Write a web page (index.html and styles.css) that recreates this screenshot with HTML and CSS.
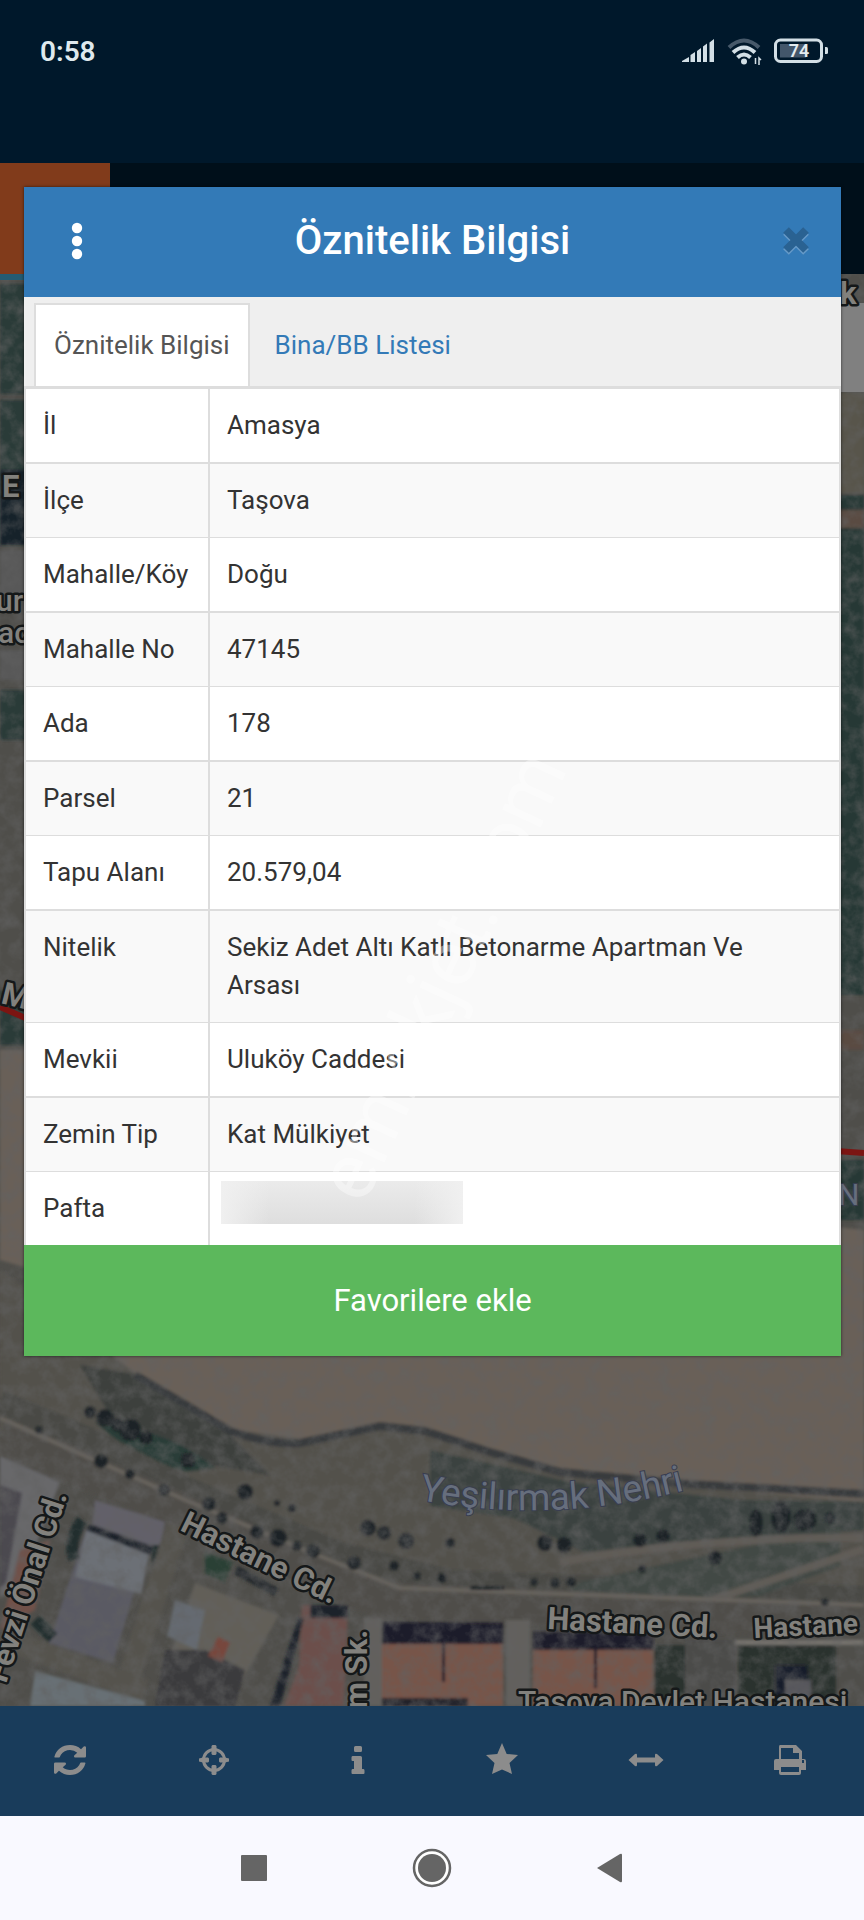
FILE: index.html
```html
<!DOCTYPE html>
<html lang="tr">
<head>
<meta charset="utf-8">
<meta name="viewport" content="width=device-width, initial-scale=1">
<title>Öznitelik Bilgisi</title>
<link rel="stylesheet" href="styles.css">
</head>
<body>
<div class="screen">
  <header class="status">
    <span class="clock">0:58</span>
    <div class="status-icons">
      <svg width="34" height="26" viewBox="0 0 34 26" fill="#d3dfe6" aria-hidden="true"><path d="M0 24v-1l7-4v5zM8.500 24v-7l4.500-3v10zM15 24V13l4-3v14zM21 24V8.500l4-3V24zM27.500 24V4.500L32 1v23z"/></svg>
      <svg width="36" height="28" viewBox="0 0 36 28" fill="none" stroke-width="4" aria-hidden="true"><path d="M2 9.500q15-14 30 0" stroke="#47596a"/><path d="M6 14.500q11-10 22 0M10.500 19.500q6.500-6 13 0" stroke="#d3dfe6"/><circle cx="17" cy="23.500" r="3" fill="#d3dfe6"/><path d="M28.500 20v6M32 20v7l0-7 2 2" stroke="#d3dfe6" stroke-width="1.500"/></svg>
      <svg width="56" height="26" viewBox="0 0 56 26" aria-hidden="true"><rect x="1.500" y="2" width="46" height="21.500" rx="5" fill="none" stroke="#d3dfe6" stroke-width="3"/><path d="M6 6h26v13.500H6z" fill="#43566a"/><path d="M51 9h1.500a1.500 1.500 0 0 1 1.500 1.500v4a1.500 1.500 0 0 1-1.500 1.500H51z" fill="#d3dfe6"/><text x="25" y="19" text-anchor="middle" class="battery-text">74</text></svg>
    </div>
  </header>
  <div class="appbar"><div class="appbar-mark"></div></div>
  <main class="map">
    <svg class="map-art" viewBox="0 274 864 1432" preserveAspectRatio="xMidYMax slice" aria-hidden="true">
      <defs>
        <filter id="grain" x="0" y="0" width="100%" height="100%"><feTurbulence type="fractalNoise" baseFrequency=".07" numOctaves="4" seed="7"/><feColorMatrix values="0 0 0 0 .12  0 0 0 0 .12  0 0 0 0 .12  1.300 0 0 0 -.5"/></filter>
        <filter id="soft"><feGaussianBlur stdDeviation="1.500"/></filter>
      </defs>
      <rect y="274" width="864" height="1432" fill="#4f4e4a"/>
      <g filter="url(#soft)">
        <path d="M0 284h30v110H0zM0 400h30v70H0zM0 690h30v50H0zM0 990h30v55H0z" fill="#2b3b38"/>
        <path d="M0 470h30v75H0z" fill="#14202a"/><path d="M0 550h30v45H0zM0 650h30v30H0z" fill="#595959"/>
        <path d="M836 393h28v100h-28z" fill="#59544b"/><path d="M836 495h28v500h-28zM836 1160h28v60h-28z" fill="#283935"/>
        <path d="M836 510h28v18h-28zM836 1030h28v20h-28z" fill="#5a4b43"/>
        <path d="M0 1050h30l90 100 744 80v272l-164-12-100-11-168-42-54-11-78 13-70-10-80-44-36-28-90-90-24-7z" fill="#696158"/>
        <path d="M0 1270l24 17 90 70 36 28 80 44 70 10 78-13 54 11 168 42 264 23v100L430 1590 200 1520 0 1430z" fill="#53514c"/>
        <path d="M80 1365l60 10 80 50 50 50-60-10-100-50z" fill="#3c413c"/>
        <path d="M135 1375q60 35 95 56 38 14 70 12l80-17 45 5 65 21 70 20 130 12 174 10" fill="none" stroke="#393b3d" stroke-width="8"/>
        <path d="M430 1450l140 32 170 18 124 2v28l-190 12-90 10-70-34-84-12z" fill="#3a4341"/>
        <path d="M130 1428q50 10 85 40l-30 4q-60-20-90-50z" fill="#2b3d38"/>
        <path d="M0 1402l90 38 90 46 160 68 110 28 414 16" fill="none" stroke="#484844" stroke-width="24"/>
        <path d="M580 1582l150-32 110-22v38l-80 30-200 2z" fill="#424a44"/>
        <path d="M560 1562q150-26 304-24M700 1604l164-55" fill="none" stroke="#605c56" stroke-width="8"/>
        <path d="M0 1436l180 74 110 52 90 38 484 22" fill="none" stroke="#504d4a" stroke-width="36"/>
        <path d="M0 1418l90 40 100 44 120 50 90 36 464 17" fill="none" stroke="#68645d" stroke-width="4"/>
        <path d="M0 1456l60 26-40 105-20 10z" fill="#67676a"/><path d="M0 1485l22 8-16 90-6 5z" fill="#4b4850"/>
        <path d="M20 1550l30-10-15 70-35 20z" fill="#6f5148"/>
        <path d="M95 1500l70 22-6 30-68-20z" fill="#626069"/>
        <path d="M86 1530l63 21-4 20-10 18-22 74-64-20z" fill="#5a5a64"/><path d="M86 1530l64 20-9 44-66-17z" fill="#6c6f76"/>
        <path d="M86 1530l4-6 64 23-4 8z" fill="#1b222a"/>
        <path d="M82 1520q-14 20-8 40M158 1545v25M35 1620l18 18" stroke="#222d2d" stroke-width="12"/>
        <path d="M178 1525L120 1706M15 1643l130 48" fill="none" stroke="#54524e" stroke-width="23"/>
        <path d="M195 1583l84 32-45 80-70-20z" fill="#625f58"/><path d="M175 1600l30 10-8 40-30-14z" fill="#656b71"/>
        <path d="M165 1650l40 0 40 20-10 36h-80z" fill="#3b3a3d"/>
        <path d="M218 1637l12 5-8 20-14-6z" fill="#77463e"/>
        <path d="M205 1552l28 10-8 20-20-8z" fill="#2b3f35"/><path d="M236 1570l40 22" stroke="#252b2d" stroke-width="9"/>
        <path d="M302 1605l46 0-4 101h-60l15-40z" fill="#6c504b"/><path d="M310 1605h38v13h-38zM298 1618l6 0-24 88h-10z" fill="#1c2029"/>
        <path d="M364 1618h18v88h-18zM506 1620h24v86h-24z" fill="#62605d"/>
        <path d="M382 1642h121v64H382zM533 1650h120v56H533z" fill="#775448"/>
        <path d="M382 1622h121v22H382zM533 1632h120v18H533zM442 1640h3v42h-3zM594 1646h3v42h-3z" fill="#1b1f2c"/>
        <path d="M382 1698h86v8h-86z" fill="#23222b"/>
        <path d="M35 1671l110 30v5H30z" fill="#687074"/>
        <path d="M655 1645h30v61h-30zM738 1645h98v61h-98z" fill="#29322f"/><path d="M685 1640h50v66h-50z" fill="#4c4c49"/><path d="M735 1640h129v5H735z" fill="#77736e"/>
        <path d="M775 1665h32l4 41h-36z" fill="#161e2b"/><path d="M785 1680h26v26h-26z" fill="#56575c"/>
        <g fill="#1c2427">
          <circle cx="39" cy="1430" r="4"/><circle cx="90" cy="1412" r="6"/><circle cx="105" cy="1418" r="9"/><circle cx="118" cy="1425" r="7"/><circle cx="130" cy="1430" r="11"/><circle cx="146" cy="1438" r="7"/><circle cx="101" cy="1461" r="7"/><circle cx="130" cy="1474" r="5"/><circle cx="164" cy="1490" r="6"/><circle cx="188" cy="1460" r="8"/><circle cx="209" cy="1504" r="7"/><circle cx="245" cy="1492" r="8"/><circle cx="222" cy="1518" r="6"/><circle cx="257" cy="1532" r="7"/><circle cx="278" cy="1538" r="9"/><circle cx="297" cy="1546" r="5"/><circle cx="313" cy="1551" r="7"/><circle cx="354" cy="1563" r="7"/><circle cx="277" cy="1503" r="3"/><circle cx="292" cy="1508" r="4"/><circle cx="368" cy="1528" r="8"/><circle cx="384" cy="1533" r="7"/><circle cx="406" cy="1541" r="8"/><circle cx="394" cy="1566" r="5"/><circle cx="417" cy="1576" r="4"/><circle cx="450" cy="1543" r="5"/><circle cx="545" cy="1543" r="8"/><circle cx="564" cy="1545" r="8"/><circle cx="442" cy="1578" r="5"/><circle cx="555" cy="1583" r="5"/><circle cx="571" cy="1582" r="5"/><circle cx="534" cy="1582" r="4"/><circle cx="640" cy="1540" r="7"/><circle cx="663" cy="1536" r="7"/><circle cx="642" cy="1569" r="4"/><circle cx="715" cy="1558" r="7"/><ellipse cx="756" cy="1523" rx="7" ry="14"/><ellipse cx="781" cy="1517" rx="10" ry="16"/><ellipse cx="805" cy="1520" rx="12" ry="11"/><circle cx="830" cy="1518" r="6"/><circle cx="825" cy="1602" r="4"/><path d="M470 1586h34v4h-34z"/>
        </g>
      </g>
      <rect y="274" width="864" height="1432" filter="url(#grain)"/>
      <path d="M836 303h28v89h-28z" fill="#808080"/><path d="M0 274h30v6H0z" fill="#245b72"/>
      <path d="M0 1007l30 13M836 1151l28 2" stroke="#7c1512" stroke-width="6"/>
      <g class="road">
        <text x="2" y="497">E</text><text x="-4" y="611" class="place">ur</text><text x="-2" y="643" class="place">ac</text>
        <text x="0" y="1003" transform="rotate(14 0 1003)">M</text><text x="840" y="304">k</text>
        <text x="179" y="1530" transform="rotate(26 179 1530)">Hastane Cd.</text>
        <text x="547" y="1629" transform="rotate(3 547 1629)">Hastane Cd.</text>
        <text x="754" y="1638" transform="rotate(-3 754 1638)" class="small">Hastane</text>
        <text x="6" y="1684" transform="rotate(-72 6 1684)">Fevzi Önal Cd.</text>
        <text x="367" y="1709" transform="rotate(-90 367 1709)">m Sk.</text>
        <text x="518" y="1712" class="place">Taşova Devlet Hastanesi</text>
      </g>
      <path id="river" d="M419 1500Q560 1526 700 1486" fill="none"/>
      <text class="water"><textPath href="#river">Yeşilırmak Nehri</textPath></text>
      <text x="838" y="1205" class="water small">N</text>
    </svg>
  </main>
  <nav class="toolbar" aria-label="Harita araçları">
    <button aria-label="Yenile"><svg width="32" height="30" viewBox="0 0 1536 1536" preserveAspectRatio="none"><path d="M1511 928q0 5-1 7-64 268-268 434.500t-478 166.500q-146 0-282.500-55t-243.500-157l-129 129q-19 19-45 19t-45-19-19-45v-448q0-26 19-45t45-19h448q26 0 45 19t19 45-19 45l-137 137q71 66 161 102t187 36q134 0 250-65t186-179q11-17 53-117 8-23 30-23h192q13 0 22.500 9.500t9.500 22.500zm25-800v448q0 26-19 45t-45 19h-448q-26 0-45-19t-19-45 19-45l138-138q-148-137-349-137-134 0-250 65t-186 179q-11 17-53 117-8 23-30 23h-199q-13 0-22.500-9.500t-9.500-22.500v-7q65-268 270-434.500t480-166.500q146 0 284 55.500t245 156.500l130-129q19-19 45-19t45 19 19 45z"/></svg></button>
    <button aria-label="Konum"><svg width="32" height="32" viewBox="0 0 32 32"><circle cx="16" cy="16" r="10.500" fill="none" stroke="currentColor" stroke-width="3"/><path d="M14.500 1h3l1 1v8l-1 1h-3l-1-1V2zM14.500 21h3l1 1v8l-1 1h-3l-1-1v-8zM1 14.500l4-1h5l1 1v3l-1 1H5l-4-1zM21 14.500l1-1h5l4 1v3l-4 1h-5l-1-1z"/></svg></button>
    <button aria-label="Bilgi"><svg width="14" height="30" viewBox="0 0 14 30"><path d="M4.500 1h5q1.500 0 1.500 1.500v3Q11 7 9.500 7h-5Q3 7 3 5.500v-3Q3 1 4.500 1zM1.500 11h8q1.500 0 1.500 1.500V24h1.500q1 0 1 1.500V28q0 1-1 1h-11q-1 0-1-1v-2.500Q.5 24 1.500 24H3v-8H1.500q-1 0-1-1v-2.500Q.5 11 1.500 11z"/></svg></button>
    <button aria-label="Favoriler"><svg width="34" height="34" viewBox="0 0 34 34"><path d="M17 0l4.700 11L33 12l-8.500 8L27 31l-10-4.500L7 31l2.500-11L1 12l11.300-1z"/></svg></button>
    <button aria-label="Ölçüm"><svg width="36" height="14" viewBox="0 0 36 14"><path d="M.5 7L7 1q2-1 2 1v2.500h18V2q0-2 2-1l6.500 6L29 13q-2 1-2-1V9.500H9V12q0 2-2 1z"/></svg></button>
    <button aria-label="Yazdır"><svg width="34" height="32" viewBox="0 0 34 32"><path fill-rule="evenodd" d="M7 1h16l6 6v8h2q2 0 2 2v9h-5v3q0 2-2 2H8q-2 0-2-2v-3H1v-9q0-2 2-2h3V3q0-2 1-2zm1 3v11h18V9h-6V4zm0 19v5h18v-5zm21-7v3h2v-3z"/></svg></button>
  </nav>
  <nav class="system-nav" aria-label="Sistem">
    <button aria-label="Son uygulamalar"><svg width="26" height="26" viewBox="0 0 26 26"><rect width="26" height="26" rx="1"/></svg></button>
    <button aria-label="Ana ekran"><svg width="40" height="40" viewBox="0 0 40 40"><circle cx="20" cy="20" r="18" fill="#fff" stroke="#656565" stroke-width="2.500"/><circle cx="20" cy="20" r="14"/></svg></button>
    <button aria-label="Geri"><svg width="26" height="30" viewBox="0 0 26 30"><path d="M0 15L23 1q2-1 2 1v26q0 2-2 1z"/></svg></button>
  </nav>

  <section class="modal" role="dialog" aria-labelledby="modal-title">
    <header class="modal-head">
      <button aria-label="Menü"><svg width="12" height="38" viewBox="0 0 12 38" fill="#fff"><circle cx="6" cy="6" r="5.200"/><circle cx="6" cy="19" r="5.200"/><circle cx="6" cy="32" r="5.200"/></svg></button>
      <h1 id="modal-title">Öznitelik Bilgisi</h1>
      <button aria-label="Kapat"><svg width="28" height="30" viewBox="0 0 28 30" fill="none" stroke-width="8"><path d="M4 6l20 20M24 6L4 26" stroke="#669ac8"/><path d="M4 4l20 20M24 4L4 24" stroke="#2a6292"/></svg></button>
    </header>
    <nav class="tabs"><a href="#bilgi" class="tab active" aria-current="page">Öznitelik Bilgisi</a><a href="#bina" class="tab">Bina/BB Listesi</a></nav>
    <table class="attributes" id="bilgi">
      <tbody>
        <tr><th scope="row">İl</th><td>Amasya</td></tr>
        <tr><th scope="row">İlçe</th><td>Taşova</td></tr>
        <tr><th scope="row">Mahalle/Köy</th><td>Doğu</td></tr>
        <tr><th scope="row">Mahalle No</th><td>47145</td></tr>
        <tr><th scope="row">Ada</th><td>178</td></tr>
        <tr><th scope="row">Parsel</th><td>21</td></tr>
        <tr><th scope="row">Tapu Alanı</th><td>20.579,04</td></tr>
        <tr><th scope="row">Nitelik</th><td>Sekiz Adet Altı Katlı Betonarme Apartman Ve Arsası</td></tr>
        <tr><th scope="row">Mevkii</th><td>Uluköy Caddesi</td></tr>
        <tr><th scope="row">Zemin Tip</th><td>Kat Mülkiyet</td></tr>
        <tr><th scope="row">Pafta</th><td class="masked-cell"><div class="masked"></div></td></tr>
      </tbody>
    </table>
    <button class="favorite">Favorilere ekle</button>
    <svg class="watermark" viewBox="0 0 260 480" aria-hidden="true"><text x="44" y="464" transform="rotate(-65 44 464)">emlakjet.com</text></svg>
  </section>
</div>
</body>
</html>
```
FILE: styles.css
```css
* { box-sizing: border-box; }
body { margin: 0; font-family: Roboto, "Liberation Sans", sans-serif; color: #333; }
button { border: 0; padding: 0; background: none; font: inherit; color: inherit; cursor: pointer; }
svg { display: block; flex: none; }

.screen { position: relative; display: flex; flex-direction: column; min-height: 100vh; overflow: hidden; }

.status { display: flex; justify-content: space-between; align-items: flex-start; height: 163px; padding: 35px 34px 0 40px; background: #00182b; }
.clock { font-size: 28px; line-height: 34px; font-weight: 600; color: #dfe9ee; }
.status-icons { display: flex; gap: 11px; padding-top: 3px; }
.battery-text { font-size: 18px; font-weight: 600; fill: #e3ebef; }

.appbar { height: 111px; background: #000f1a; }
.appbar-mark { width: 110px; height: 100%; background: #813b1b; }

.map { position: relative; flex: 1; overflow: hidden; background: #4f4e4a; }
.map-art { position: absolute; inset: 0; width: 100%; height: 100%; }
.road text { font-size: 31px; font-weight: 700; fill: #82817d; stroke: #151819; stroke-width: 5px; paint-order: stroke; stroke-linejoin: round; }
.road .place { font-size: 30px; font-weight: 500; }
.road .small { font-size: 28px; }
.water { font-size: 37px; fill: #666e7d; stroke: #393e50; stroke-width: 2px; paint-order: stroke; }
.water.small { font-size: 30px; }

.toolbar { display: grid; grid-template-columns: repeat(6, 1fr); height: 110px; background: #193c5b; color: #8c8c8c; }
.toolbar button { display: flex; align-items: center; justify-content: center; padding: 0 4px 2px 0; }
.toolbar svg { fill: currentColor; }

.system-nav { display: flex; justify-content: center; align-items: center; gap: 118px; height: 104px; background: #f9f9ff; }
.system-nav button { display: flex; justify-content: center; width: 60px; }
.system-nav svg { fill: #656565; }

.modal { position: absolute; top: 187px; left: 24px; right: 23px; background: #fff; box-shadow: 0 0 3px rgba(0, 0, 0, .6); }
.modal-head { display: flex; align-items: center; justify-content: space-between; height: 110px; padding: 0 31px 2px 47px; background: #337ab7; color: #fff; }
.modal-head h1 { margin: 0; font-size: 40px; line-height: 44px; font-weight: 500; }

.tabs { display: flex; height: 92px; padding: 6px 10px 0; background: #efefef; border-bottom: 3px solid #ddd; }
.tab { padding: 22px 18px 0; border: 2px solid transparent; border-bottom: 0; line-height: 37px; font-size: 26px; color: #337ab7; text-decoration: none; }
.tab.active { background: #fff; border-color: #ddd; color: #555; margin-right: 5px; }

.attributes { width: 100%; border-spacing: 0; border: solid #ddd; border-width: 0 2px; font-size: 26px; line-height: 38px; }
.attributes th, .attributes td { padding: 17px 17px 18px; vertical-align: top; text-align: left; font-weight: 400; border-bottom: 2px solid #ddd; }
.attributes th { white-space: nowrap; border-right: 2px solid #ddd; width: 184px; }
.attributes tr:nth-child(even) { background: #f9f9f9; }
.attributes tr:nth-child(even) > * { border-bottom-width: 1px; }
.attributes tr:last-child > * { border-bottom: 0; }
.attributes .masked-cell { padding: 9px 11px; }
.masked { width: 242px; height: 43px; background: linear-gradient(90deg, #f0f0f0, transparent 20%, transparent 80%, #f0f0f0), linear-gradient(#ebebeb, #dedede); }

.favorite { display: block; width: 100%; height: 111px; background: #5cb85c; color: #fff; font-size: 31px; }
.watermark { position: absolute; top: 555px; left: 296px; width: 260px; height: 480px; pointer-events: none; }
.watermark text { font-size: 80px; fill: #fff; fill-opacity: .4; }
```
